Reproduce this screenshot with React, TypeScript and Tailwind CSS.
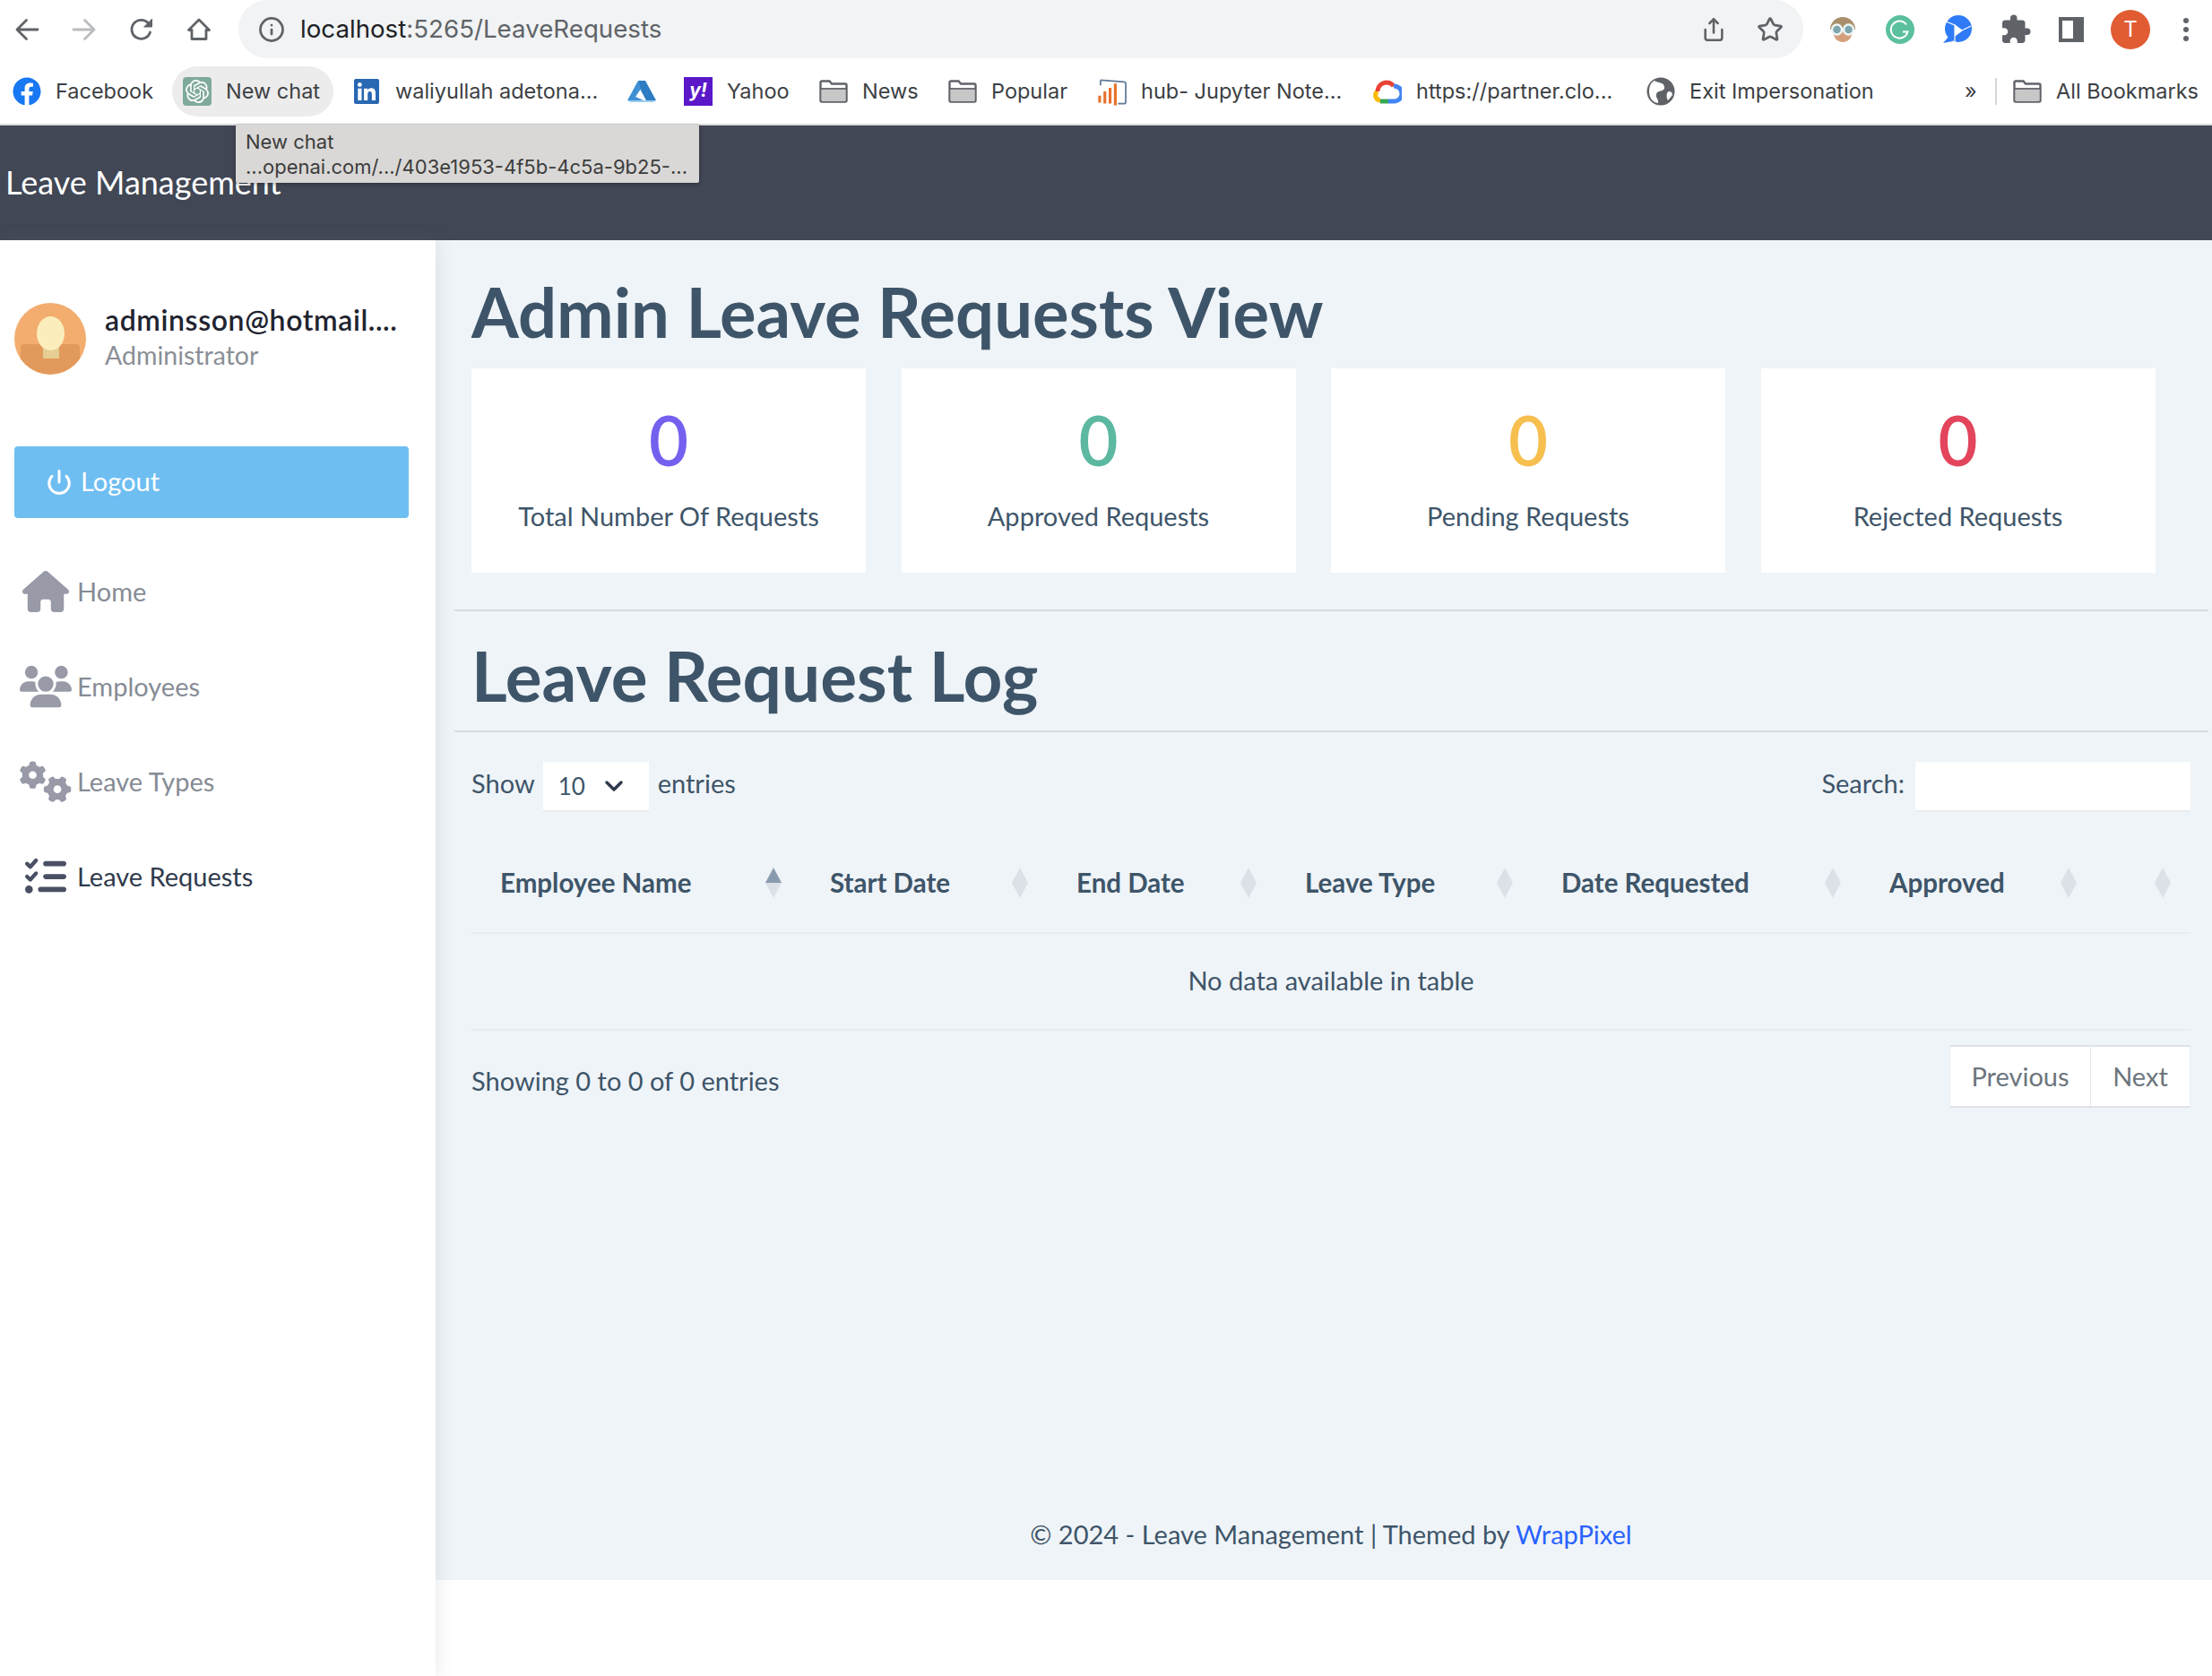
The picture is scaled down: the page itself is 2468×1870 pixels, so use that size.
import React from 'react';
import { Info, Share, Star, Power, ChevronDown } from 'lucide-react';
import { FaFacebook, FaLinkedin } from 'react-icons/fa';
import { FaHouse, FaUsers, FaGears, FaListCheck } from 'react-icons/fa6';
import { MdExtension } from 'react-icons/md';
import { SiOpenai } from 'react-icons/si';

const chromeFont = "font-['Inter','Liberation_Sans',sans-serif]";
const pageFont = "font-['Lato','Noto_Sans',sans-serif]";

const Folder = () => (
  <svg viewBox="0 0 32 26" className="w-[32px] h-[26px] shrink-0">
    <path d="M1.500 3a1.500 1.500 0 0 1 1.500-1.500h8.500l2.500 3h15a1.500 1.500 0 0 1 1.500 1.500v17a1.500 1.500 0 0 1-1.500 1.500H3A1.500 1.500 0 0 1 1.500 23z" fill="#fff" stroke="#5f6368" strokeWidth="2.4" />
    <path d="M2.500 11h27v12a1 1 0 0 1-1 1h-25a1 1 0 0 1-1-1z" fill="#c7c7c7" />
    <path d="M2 10h28" stroke="#5f6368" strokeWidth="1.800" />
  </svg>
);

const SortIcon = ({ active }: { active?: boolean }) => (
  <svg viewBox="0 0 18 34" className="w-[18px] h-[34px] shrink-0">
    <path d="M9 0 L18 17 H0 Z" fill={active ? '#8b9bae' : '#dbe1e7'} />
    <path d="M9 34 L18 17 H0 Z" fill="#dbe1e7" />
  </svg>
);

const ToolbarIcon = ({ children, color = '#5f6368' }: { children: React.ReactNode; color?: string }) => (
  <svg viewBox="0 0 28 28" className="w-[28px] h-[28px] shrink-0" fill="none" stroke={color} strokeWidth="2.800" strokeLinecap="round" strokeLinejoin="round">
    {children}
  </svg>
);

const Bookmark = ({ w, icon, label }: { w: string; icon: React.ReactNode; label?: string }) => (
  <div className={`${w} shrink-0 flex items-center gap-[16px]`}>
    {icon}
    {label && <span>{label}</span>}
  </div>
);

const StatCard = ({ color, label }: { color: string; label: string }) => (
  <div className="w-[440px] h-[228px] bg-white flex flex-col items-center pt-[37px]">
    <div className={`text-[76px] leading-[86px] font-semibold ${color}`}>0</div>
    <div className="mt-[22px] text-[29px] leading-[40px] text-[#3e5569]">{label}</div>
  </div>
);

const NavItem = ({ icon, label, active }: { icon: React.ReactNode; label: string; active?: boolean }) => (
  <div className="flex items-center h-[106px] pl-[16px]">
    <div className="w-[70px] flex justify-center shrink-0">{icon}</div>
    <span className={`text-[29px] ${active ? 'text-[#2f3a4c]' : 'text-[#868b95]'}`}>{label}</span>
  </div>
);

const columns = [
  { label: 'Employee Name', w: 'w-[368px]', active: true },
  { label: 'Start Date', w: 'w-[275px]' },
  { label: 'End Date', w: 'w-[255px]' },
  { label: 'Leave Type', w: 'w-[286px]' },
  { label: 'Date Requested', w: 'w-[366px]' },
  { label: 'Approved', w: 'w-[263px]' },
  { label: '', w: 'w-[105px]' },
];

export default function App() {
  return (
    <div className="w-[2468px] h-[1870px] overflow-hidden bg-white relative">
      {/* Browser toolbar */}
      <div className={`${chromeFont} h-[66px] flex items-center text-[#5f6368]`}>
        <div className="w-[266px] flex items-center shrink-0 pl-[16px] gap-[36px]">
          <ToolbarIcon>
            <path d="M26 14H3M13.500 3.500 3 14l10.500 10.500" />
          </ToolbarIcon>
          <ToolbarIcon color="#b9bbbd">
            <path d="M2 14h23M14.500 3.500 25 14 14.500 24.500" />
          </ToolbarIcon>
          <ToolbarIcon>
            <path d="M23.500 17a10.500 10.500 0 1 1-2-10" />
            <path d="M25.500 2.500v8.500h-8.500z" fill="#5f6368" strokeWidth="1" />
          </ToolbarIcon>
          <ToolbarIcon>
            <path d="M14 3 2.500 14.500h3.500v10h16v-10h3.500z" />
          </ToolbarIcon>
        </div>
        <div className="w-[1746px] h-[65px] -mt-[1px] rounded-[33px] bg-[#f1f3f4] flex items-center pl-[22px] pr-[22px]">
          <Info size={30} strokeWidth={2.2} />
          <span className="ml-[17px] text-[27.7px] text-[#202124]">localhost<span className="text-[#5f6368]">:5265/LeaveRequests</span></span>
          <div className="ml-auto flex items-center gap-[34px]">
            <Share size={28} strokeWidth={2.2} />
            <Star size={30} strokeWidth={2.2} />
          </div>
        </div>
        <div className="flex items-center flex-1">
          <svg viewBox="0 0 32 32" className="ml-[28px] w-[32px] h-[32px] shrink-0">
            <path d="M2 16a14 14 0 0 1 28 0z" fill="#a98f6c" />
            <path d="M5 16h22c0 9-5 14-11 14S5 25 5 16z" fill="#d59f7d" />
            <circle cx="9.500" cy="16" r="5.500" fill="#7fa6ad" stroke="#eef6f7" strokeWidth="2.400" />
            <circle cx="22.500" cy="16" r="5.500" fill="#7fa6ad" stroke="#eef6f7" strokeWidth="2.400" />
          </svg>
          <svg viewBox="0 0 32 32" className="ml-[32px] w-[32px] h-[32px] shrink-0">
            <circle cx="16" cy="16" r="16" fill="#5bc09d" />
            <path d="M23 10.500a9.500 9.500 0 1 0 1.500 8H19" fill="none" stroke="#fff" strokeWidth="2" />
          </svg>
          <svg viewBox="0 0 32 32" className="ml-[32px] w-[32px] h-[32px] shrink-0">
            <circle cx="17" cy="15" r="15" fill="#2f7bf6" />
            <path d="M6 24 0 31l11-2z" fill="#2f7bf6" />
            <path d="M3 7l10 4v19M13 11l8 6-8 6zM21 17l10-5" fill="none" stroke="#fff" strokeWidth="1.200" />
            <path d="M13 11l8 6-8 6z" fill="#fff" />
          </svg>
          <MdExtension size={36} className="ml-[31px] shrink-0" />
          <div className="ml-[30px] w-[28px] h-[28px] shrink-0 border-y-[4px] border-l-[4px] border-r-[12px] border-[#5f6368]" />
          <div className="ml-[30px] w-[44px] h-[44px] rounded-full bg-[#e15c33] text-white text-[24px] flex items-center justify-center shrink-0">T</div>
          <div className="ml-[37px] flex flex-col gap-[4px] shrink-0">
            <div className="w-[6px] h-[6px] rounded-full bg-[#5f6368]" />
            <div className="w-[6px] h-[6px] rounded-full bg-[#5f6368]" />
            <div className="w-[6px] h-[6px] rounded-full bg-[#5f6368]" />
          </div>
        </div>
      </div>

      {/* Bookmarks bar */}
      <div className={`${chromeFont} h-[74px] border-b-[2px] border-[#dedede] flex items-center pl-[14px] text-[23.5px] text-[#3c4043] whitespace-nowrap relative`}>
        <Bookmark w="w-[178px]" icon={<FaFacebook size={32} className="text-[#1877f2] shrink-0" />} label="Facebook" />
        <div className="w-[180px] mr-[21px] h-[56px] rounded-[28px] bg-[#ececec] flex items-center pl-[12px] gap-[16px] shrink-0">
          <div className="w-[32px] h-[32px] rounded-[4px] bg-[#7fa99b] flex items-center justify-center">
            <SiOpenai size={26} className="text-white" />
          </div>
          <span>New chat</span>
        </div>
        <Bookmark w="w-[307px]" icon={<FaLinkedin size={32} className="text-[#2867b2] shrink-0" />} label="waliyullah adetona..." />
        <Bookmark
          w="w-[63px]"
          icon={
            <svg viewBox="0 0 32 32" className="w-[32px] h-[32px] shrink-0">
              <path d="M12 4h8l12 22H21L14 13z" fill="#2d7cc4" />
              <path d="M12 4l3 9-6 9 9 4H0z" fill="#3f8fd2" />
              <path d="M0 26h32l-3 2H3z" fill="#9fcdf0" />
            </svg>
          }
        />
        <Bookmark
          w="w-[151px]"
          icon={<div className="w-[32px] h-[32px] bg-[#5a18c9] text-white text-[21px] font-bold italic leading-[30px] text-center shrink-0">y!</div>}
          label="Yahoo"
        />
        <Bookmark w="w-[144px]" icon={<Folder />} label="News" />
        <Bookmark w="w-[166px]" icon={<Folder />} label="Popular" />
        <Bookmark
          w="w-[308px]"
          icon={
            <svg viewBox="0 0 34 34" className="w-[33px] h-[34px] shrink-0">
              <path d="M4 4 31 6a2 2 0 0 1 2 2v21a2 2 0 0 1-2 2h-7M4 4v6" fill="none" stroke="#5f7a99" strokeWidth="1.800" />
              <path d="M3 22v8M9 17v14M15 13v18M21 8v25" stroke="#e8702a" strokeWidth="3.200" fill="none" />
            </svg>
          }
          label="hub- Jupyter Note..."
        />
        <Bookmark
          w="w-[305px]"
          icon={
            <svg viewBox="0 0 32 28" className="w-[32px] h-[28px] shrink-0">
              <path d="M8 24a5.500 5.500 0 0 1-3-10" fill="none" stroke="#fbbc05" strokeWidth="5" />
              <path d="M8 25h9" stroke="#34a853" strokeWidth="5" fill="none" />
              <path d="M5 14a10 10 0 0 1 18-6" fill="none" stroke="#ea4335" strokeWidth="5" />
              <path d="M23 8a8.500 8.500 0 0 1 1 17h-7" fill="none" stroke="#4285f4" strokeWidth="5" />
            </svg>
          }
          label="https://partner.clo..."
        />
        <Bookmark
          w="w-[355px]"
          icon={
            <svg viewBox="0 0 32 32" className="w-[32px] h-[32px] shrink-0">
              <circle cx="16" cy="16" r="15.500" fill="#5f6368" />
              <path d="M9 4c4 3 10 1 11 7s-8 3-9 8 3 5 2 10c-7-1-10-7-10-13S5 6 9 4zM25 16c3 0 4 2 4 4l-5 6c-2-3-2-9 1-10z" fill="#fff" />
            </svg>
          }
          label="Exit Impersonation"
        />
        <span className="w-[34px] shrink-0">»</span>
        <div className="w-[2px] mr-[18px] h-[30px] bg-[#d5d6d8] shrink-0" />
        <Bookmark w="w-[210px]" icon={<Folder />} label="All Bookmarks" />

        {/* Link tooltip */}
        <div className="absolute left-[263px] top-[73px] w-[517px] h-[65px] bg-[#d9d8d6] shadow-[0_1px_4px_rgba(0,0,0,0.35)] rounded-[2px] z-10 px-[11px] pt-[5px] text-[22px] leading-[28px] text-[#3c3c3c]">
          <div>New chat</div>
          <div>...openai.com/.../403e1953-4f5b-4c5a-9b25-...</div>
        </div>
      </div>

      {/* App header */}
      <div className={`${pageFont} h-[128px] bg-[#414755] flex items-center pl-[6px] pb-[3px] text-[36px] text-white`}>
        Leave Management
      </div>

      <div className={`${pageFont} flex h-[1602px]`}>
        {/* Sidebar */}
        <aside className="w-[486px] shrink-0 bg-white shadow-[2px_0_18px_rgba(120,130,140,0.16)] z-[1] pt-[70px]">
          <div className="flex items-center pl-[16px]">
            <svg viewBox="0 0 80 80" className="w-[80px] h-[80px] shrink-0">
              <circle cx="40" cy="40" r="40" fill="#f2ad6f" />
              <path d="M7 50a4 4 0 0 1 4-4h58a4 4 0 0 1 4 4v12a40 40 0 0 1-66 0z" fill="#e29a5c" />
              <rect x="32" y="44" width="18" height="18" fill="#e6cd92" />
              <ellipse cx="40.500" cy="34" rx="15.500" ry="19" fill="#fbeebc" />
            </svg>
            <div className="ml-[21px] min-w-0 pb-[2px]">
              <div className="text-[32px] tracking-[0.6px] leading-[38px] font-semibold text-[#1f2430] whitespace-nowrap">adminsson@hotmail....</div>
              <div className="text-[28.5px] leading-[40px] text-[#8a8f96]">Administrator</div>
            </div>
          </div>
          <div className="ml-[16px] mt-[80px] w-[440px] h-[80px] rounded-[4px] bg-[#6fbef2] flex items-center pl-[35px] text-white text-[29px]">
            <Power size={30} strokeWidth={2.4} />
            <span className="ml-[9px] pb-[2px]">Logout</span>
          </div>
          <div className="mt-[29px]">
            <NavItem icon={<FaHouse size={52} className="text-[#989aa8]" />} label="Home" />
            <NavItem icon={<FaUsers size={58} className="text-[#989aa8]" />} label="Employees" />
            <NavItem icon={<FaGears size={58} className="text-[#989aa8]" />} label="Leave Types" />
            <NavItem icon={<FaListCheck size={46} className="text-[#4a5064]" />} label="Leave Requests" active />
          </div>
        </aside>

        {/* Main content */}
        <main className="flex-1 h-[1495px] bg-[#eff4f8] text-[#3e5569] flex flex-col pl-[21px] pr-[4px]">
          <div className="pl-[19px] pr-[20px]">
            <h1 className="text-[76px] leading-[86px] font-bold text-[#3e5569] mt-[37px]">Admin Leave Requests View</h1>
            <div className="flex gap-[39.5px] mt-[20px]">
              <StatCard color="text-[#7460ee]" label="Total Number Of Requests" />
              <StatCard color="text-[#5cb8a1]" label="Approved Requests" />
              <StatCard color="text-[#f6bf4e]" label="Pending Requests" />
              <StatCard color="text-[#e2455c]" label="Rejected Requests" />
            </div>
          </div>
          <div className="mt-[41px] h-[2px] bg-[#d5dbe0]" />
          <h2 className="pl-[19px] mt-[28px] mb-[1px] text-[76.5px] leading-[86px] font-bold text-[#3e5569]">Leave Request Log</h2>
          <div className="mt-[18px] h-[2px] bg-[#d5dbe0]" />

          <div className="pl-[19px] pr-[20px]">
            <div className="flex items-center justify-between mt-[33px] text-[29px]">
              <div className="flex items-center">
                <span className="pb-[8px]">Show</span>
                <div className="ml-[9px] w-[118px] h-[56px] bg-white border-b-[2px] border-[#e9ecef] flex items-center pl-[17px] text-[26px]">
                  10
                  <ChevronDown size={32} strokeWidth={2.6} className="ml-[16px] text-[#2f3a4c]" />
                </div>
                <span className="ml-[10px] pb-[8px]">entries</span>
              </div>
              <div className="flex items-center">
                <span className="pb-[8px]">Search:</span>
                <div className="ml-[12px] w-[307px] h-[56px] bg-white border-b-[2px] border-[#e9ecef]" />
              </div>
            </div>

            <table className="table-fixed w-[1918px] mt-[24px] border-collapse">
              <colgroup>
                {columns.map((c) => (
                  <col key={c.label} className={c.w} />
                ))}
              </colgroup>
              <thead>
                <tr className="h-[111px] border-b-[2px] border-[#e9ecef]">
                  {columns.map((c) => (
                    <th key={c.label} className="p-0 font-bold text-[29.5px] text-left">
                      <div className="flex items-center justify-between pl-[32px] pr-[22px]">
                        <span>{c.label}</span>
                        <SortIcon active={c.active} />
                      </div>
                    </th>
                  ))}
                </tr>
              </thead>
              <tbody>
                <tr className="h-[108px] border-b-[2px] border-[#e9ecef]">
                  <td colSpan={7} className="text-center text-[29px] pb-[2px]">No data available in table</td>
                </tr>
              </tbody>
            </table>

            <div className="flex items-center justify-between mt-[16px] text-[29px]">
              <span className="mt-[10px]">Showing 0 to 0 of 0 entries</span>
              <div className="flex h-[70px] bg-white border-y-[2px] border-[#dfe3e7] border-x border-x-[#e9ecef] text-[#6c757d]">
                <div className="w-[157px] flex items-center justify-center border-r border-[#e4e7ea]">Previous</div>
                <div className="w-[110px] flex items-center justify-center">Next</div>
              </div>
            </div>
          </div>

          <div className="mt-auto mb-[30px] text-center text-[29px] pl-[19px] pr-[20px]">
            © 2024 - Leave Management | Themed by <span className="text-[#2962ff]">WrapPixel</span>
          </div>
        </main>
      </div>
    </div>
  );
}
